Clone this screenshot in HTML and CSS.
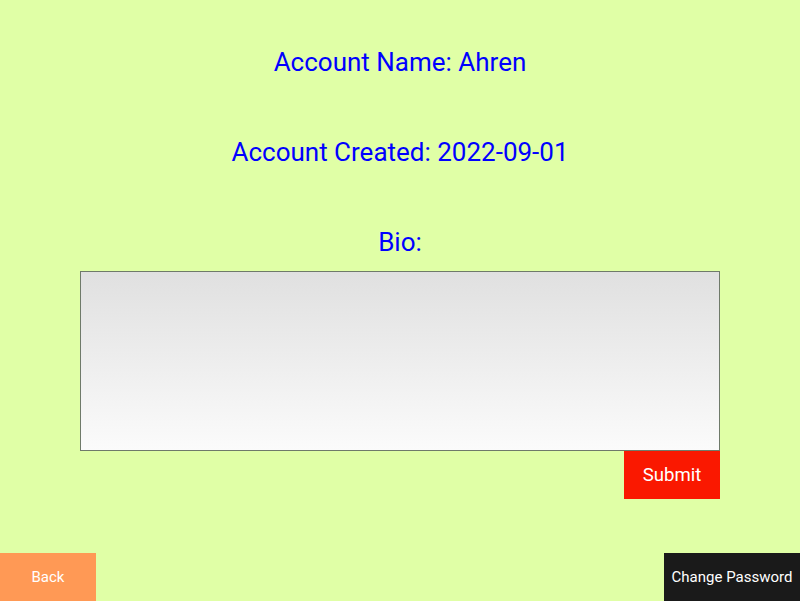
FILE: index.html
```html
<!DOCTYPE html>
<html>
<head>
<meta charset="utf-8">
<link rel="stylesheet" href="styles.css">
</head>
<body>
<div class="page">
  <main class="content">
    <h2 class="label">Account Name: Ahren</h2>
    <h2 class="label">Account Created: 2022-09-01</h2>
    <h2 class="label bio-label">Bio:</h2>
    <div class="bio-block">
      <textarea class="bio"></textarea>
      <div class="submit-row">
        <button class="submit">Submit</button>
      </div>
    </div>
  </main>
  <footer class="footer">
    <button class="back">Back</button>
    <button class="change">Change Password</button>
  </footer>
</div>
</body>
</html>
```
FILE: styles.css
```css
html, body {
  margin: 0;
  padding: 0;
}
body {
  background: #e0ffa6;
  font-family: Roboto, "Liberation Sans", sans-serif;
}
.page {
  height: 601px;
  display: flex;
  flex-direction: column;
  justify-content: space-between;
}
.content {
  display: flex;
  flex-direction: column;
  align-items: center;
  padding-top: 47px;
}
.label {
  margin: 0 0 60px 0;
  font-size: 26px;
  line-height: 30px;
  font-weight: 400;
  color: #0000ff;
}
.bio-label {
  margin-bottom: 14px;
}
.bio-block {
  width: 640px;
  display: flex;
  flex-direction: column;
}
.bio {
  box-sizing: border-box;
  width: 640px;
  height: 180px;
  margin: 0;
  border: 1px solid #6f7a6a;
  background: linear-gradient(to bottom, #e0e0e0, #fbfbfb);
  resize: none;
  display: block;
  font-family: Roboto, sans-serif;
}
.submit-row {
  display: flex;
  justify-content: flex-end;
}
button {
  font-family: Roboto, "Liberation Sans", sans-serif;
  border: none;
  margin: 0;
  padding: 0;
  cursor: pointer;
}
.submit {
  width: 96px;
  height: 48px;
  background: #fa1800;
  color: #ffffff;
  font-size: 18.6px;
}
.footer {
  display: flex;
  justify-content: space-between;
}
.back {
  width: 96px;
  height: 48px;
  background: #ff9955;
  color: #ffffff;
  font-size: 15px;
}
.change {
  width: 136px;
  height: 48px;
  background: #1a1a1a;
  color: #ffffff;
  font-size: 15px;
}
```
